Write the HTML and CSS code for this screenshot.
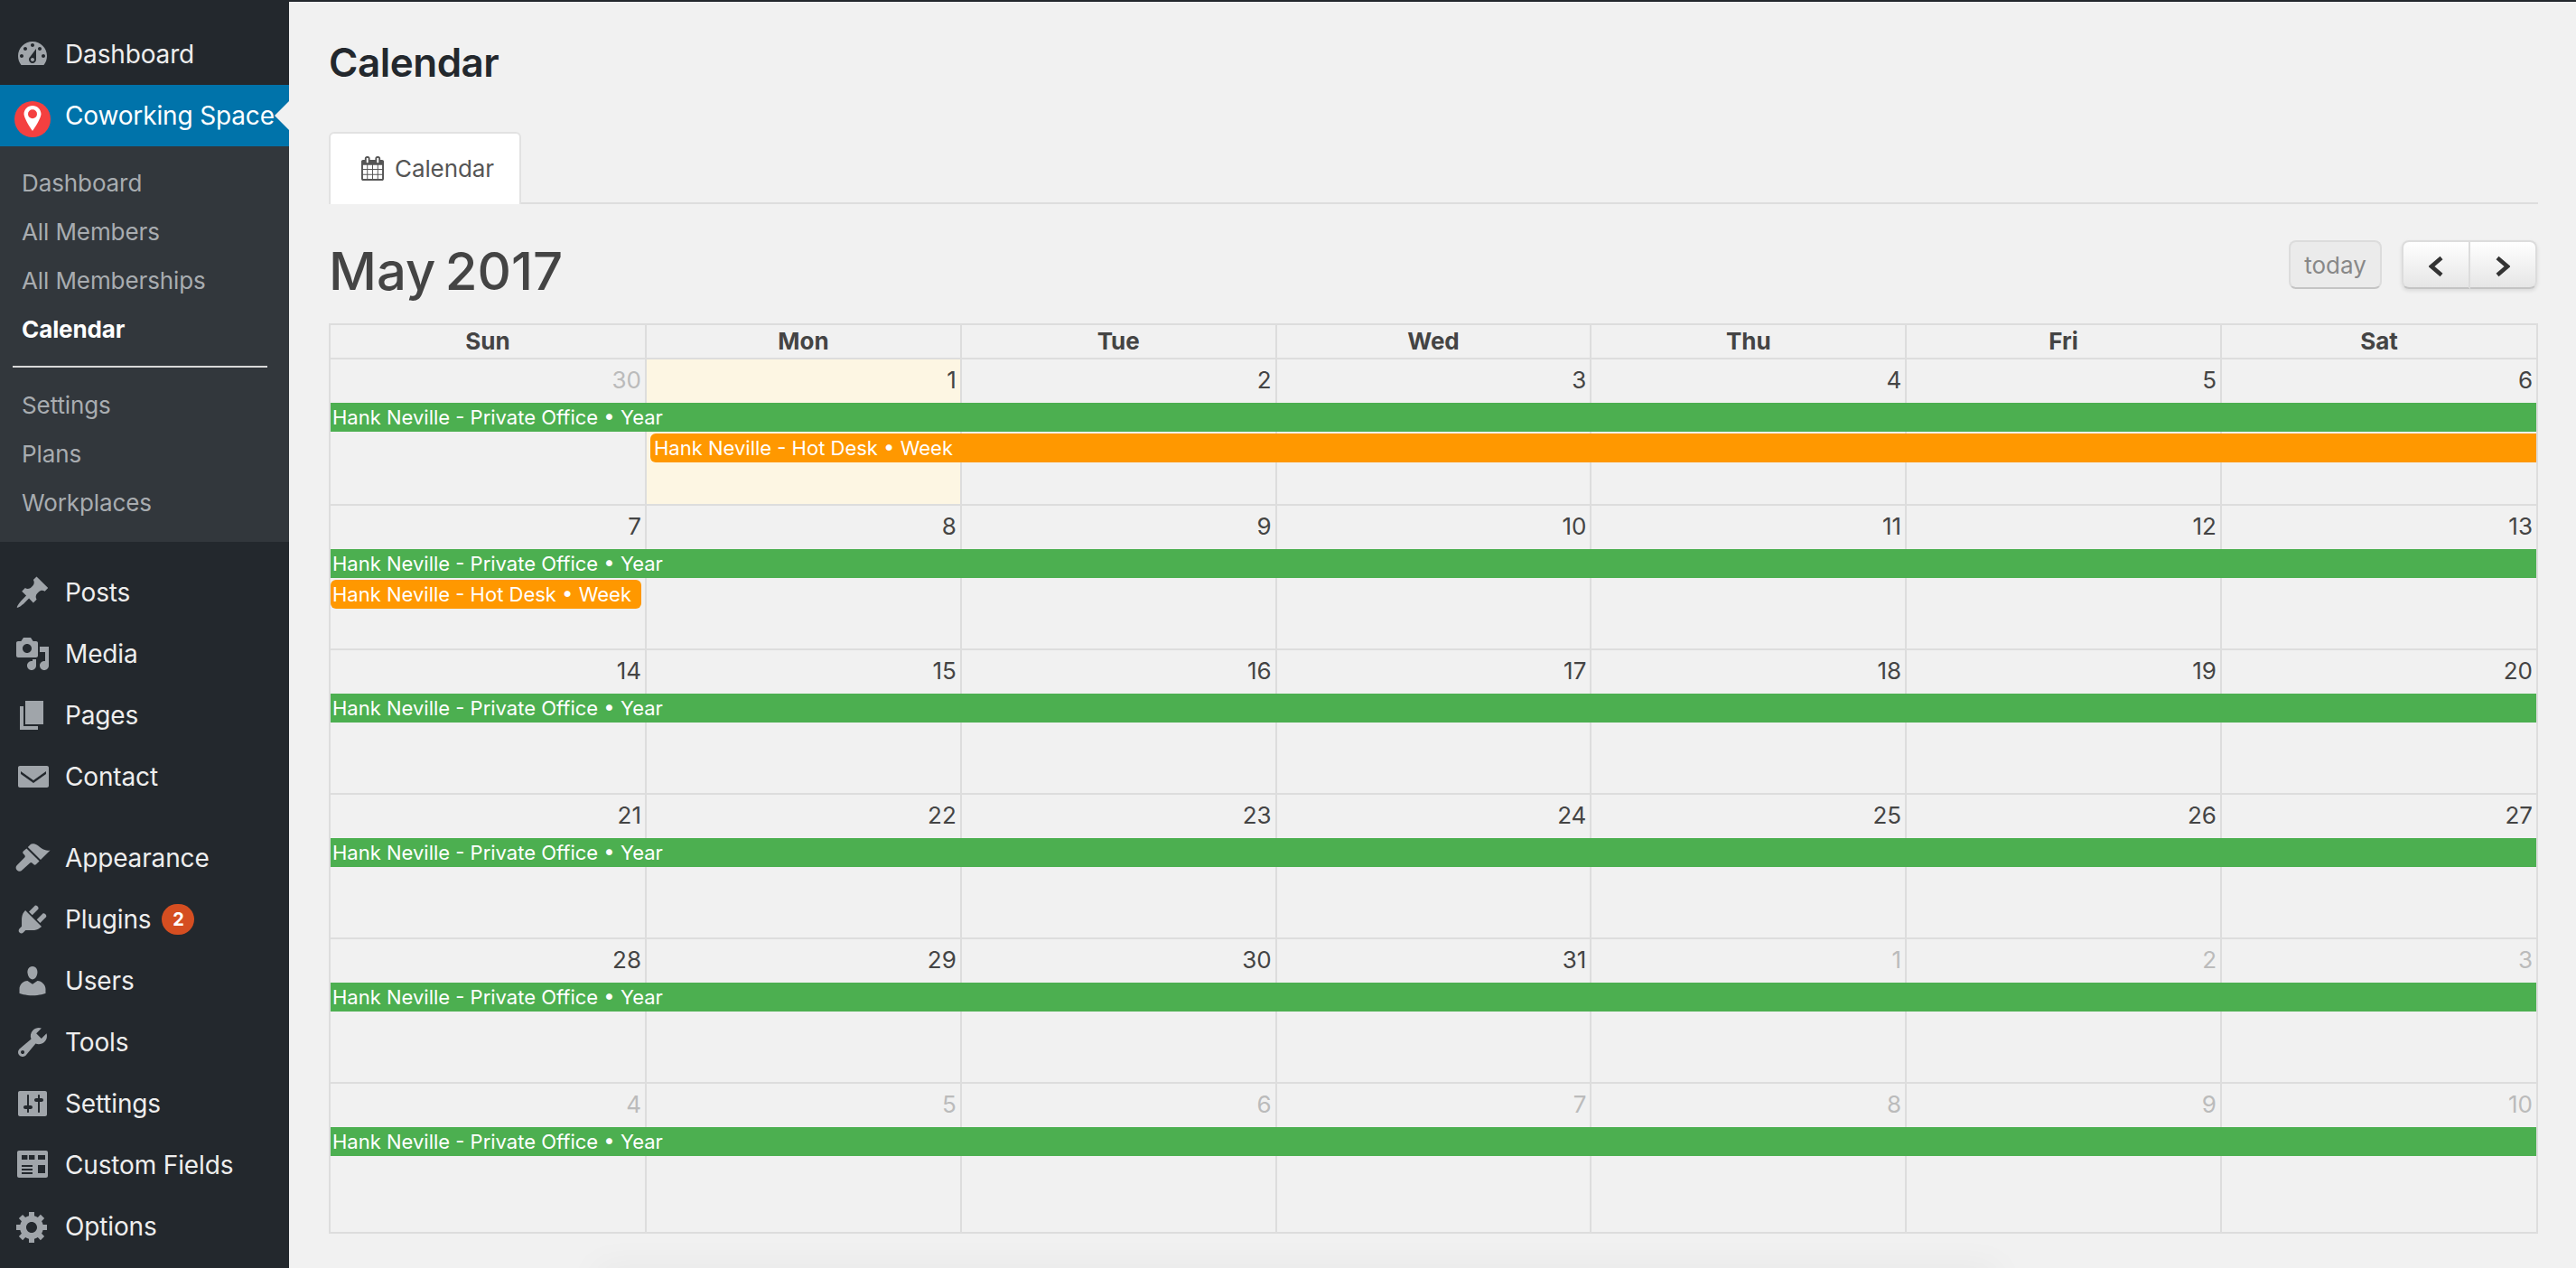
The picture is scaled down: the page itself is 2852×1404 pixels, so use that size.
FILE: index.html
```html
<!DOCTYPE html>
<html>
<head>
    <title>Calendar</title>
    <link rel="stylesheet" href="styles.css">
</head>
<body>
    <nav class="sidebar">
        <a class="menu-item"><svg class="icon" viewBox="0 0 20 20"><path fill-rule="evenodd" d="M3.76 16h12.48c1.1-1.37 1.76-3.11 1.76-5 0-4.42-3.58-8-8-8s-8 3.58-8 8c0 1.89.66 3.63 1.76 5zM10 4c.55 0 1 .45 1 1s-.45 1-1 1-1-.45-1-1 .45-1 1-1zM6 6c.55 0 1 .45 1 1s-.45 1-1 1-1-.45-1-1 .45-1 1-1zm8 0c.55 0 1 .45 1 1s-.45 1-1 1-1-.45-1-1 .45-1 1-1zm-5.37 5.55L12 7v6c0 1.1-.9 2-2 2s-2-.9-2-2c0-.57.24-1.08.63-1.45zM4 10c.55 0 1 .45 1 1s-.45 1-1 1-1-.45-1-1 .45-1 1-1zm12 0c.55 0 1 .45 1 1s-.45 1-1 1-1-.45-1-1 .45-1 1-1zm-5 3c0-.55-.45-1-1-1s-1 .45-1 1 .45 1 1 1 1-.45 1-1z"/></svg>Dashboard</a>
        <a class="menu-item active"><svg class="icon" viewBox="0 0 40 40"><circle cx="20" cy="24" r="20" fill="#f44040"/><path fill="#fff" fill-rule="evenodd" d="M20 9c-5.300 0-9.500 4.200-9.500 9.300 0 3.400 5.500 13.500 9.500 18.700 4-5.200 9.500-15.300 9.500-18.700C29.500 13.200 25.300 9 20 9zm0 4.300a5 5 0 1 1 0 10 5 5 0 0 1 0-10z"/></svg>Coworking Space</a>
        <div class="submenu">
            <a class="sub-item">Dashboard</a>
            <a class="sub-item">All Members</a>
            <a class="sub-item">All Memberships</a>
            <a class="sub-item current">Calendar</a>
            <hr class="sub-divider">
            <a class="sub-item">Settings</a>
            <a class="sub-item">Plans</a>
            <a class="sub-item">Workplaces</a>
        </div>
        <div class="menu-group">
            <a class="menu-item"><svg class="icon" viewBox="0 0 20 20"><path d="M10.440 3.020l1.820-1.820 6.360 6.350-1.830 1.820c-1.050-.68-2.480-.57-3.410.36l-.75.75c-.92.93-1.040 2.350-.35 3.410l-1.830 1.820-2.410-2.410-2.800 2.790c-.42.42-3.380 2.710-3.800 2.290s1.860-3.390 2.280-3.810l2.790-2.790L4.100 9.360l1.830-1.820c1.050.69 2.480.57 3.400-.36l.75-.75c.93-.92 1.050-2.350.36-3.410z"/></svg>Posts</a>
            <a class="menu-item"><svg class="icon" viewBox="0 0 20 20"><path fill-rule="evenodd" d="M13 11V4c0-.55-.45-1-1-1h-1.670L9 1H5L3.670 3H2c-.55 0-1 .45-1 1v7c0 .55.45 1 1 1h10c.55 0 1-.45 1-1zM7 4.500c1.380 0 2.500 1.120 2.500 2.500S8.380 9.500 7 9.500 4.500 8.380 4.500 7 5.620 4.500 7 4.500zM14 6h5v10.500c0 1.380-1.120 2.500-2.500 2.500S14 17.880 14 16.500s1.120-2.500 2.500-2.500c.17 0 .34.020.5.050V9h-3V6zm-4 8.050V13h2v3.500c0 1.380-1.120 2.500-2.500 2.500S7 17.880 7 16.500 8.120 14 9.500 14c.17 0 .34.020.5.050z"/></svg>Media</a>
            <a class="menu-item"><svg class="icon" viewBox="0 0 20 20"><path d="M6 15V2h10v13H6zm-1 1h8v2H3V5h2v11z"/></svg>Pages</a>
            <a class="menu-item"><svg class="icon" viewBox="0 0 20 20"><path fill-rule="evenodd" d="M3 4h15c.55 0 1 .45 1 1v10c0 .55-.45 1-1 1H3c-.55 0-1-.45-1-1V5c0-.55.45-1 1-1zm.500 3l7 5 7-5v1.500l-7 5-7-5z"/></svg>Contact</a>
        </div>
        <div class="menu-group">
            <a class="menu-item"><svg class="icon" viewBox="0 0 20 20"><path d="M14.480 11.060L7.410 3.990l1.500-1.500c.5-.56 2.300-.47 3.510.32 1.210.8 1.430 1.280 2.910 2.100 1.180.64 2.450 1.260 4.450.85zM6.700 4.700l7.070 7.070-1.770 1.770c-.39.39-1.020.39-1.410 0l-.7-.7c-.39-.39-1.030-.39-1.420 0L4.200 16.800c-.8.8-2 .8-2.800 0s-.8-2 0-2.800l4.200-4.200c.39-.39.39-1.030 0-1.420l-.7-.7c-.39-.39-.39-1.020 0-1.410z"/></svg>Appearance</a>
            <a class="menu-item"><svg class="icon" viewBox="0 0 20 20"><path d="M13.110 4.360L9.870 7.600 8 5.730l3.240-3.240c.35-.34 1.050-.2 1.560.32.52.51.66 1.210.31 1.550zm-8 1.770l.91-1.120 9.010 9.010-1.190.84c-.71.71-2.630 1.160-3.820 1.160H6.140L4.900 17.260c-.59.59-1.540.59-2.120 0-.59-.58-.59-1.530 0-2.120l1.240-1.240v-3.880c0-1.130.4-3.190 1.090-3.890zm7.260 3.970l3.240-3.240c.34-.35 1.040-.21 1.550.31.52.51.66 1.210.31 1.550l-3.240 3.250z"/></svg>Plugins<span class="badge">2</span></a>
            <a class="menu-item"><svg class="icon" viewBox="0 0 20 20"><path d="M10 9.250c-2.270 0-2.730-3.440-2.730-3.440C7 4.020 7.820 2 9.970 2c2.160 0 2.980 2.020 2.710 3.810 0 0-.41 3.440-2.680 3.440zm0 2.570L12.720 10c2.390 0 4.520 2.330 4.520 4.530v2.490s-3.650 1.130-7.240 1.130c-3.650 0-7.240-1.130-7.240-1.130v-2.490c0-2.250 1.940-4.480 4.470-4.480z"/></svg>Users</a>
            <a class="menu-item"><svg class="icon" viewBox="0 0 20 20"><path fill-rule="evenodd" d="M16.680 9.770c-1.340 1.340-3.300 1.670-4.950.99l-5.410 6.520c-.99.99-2.590.99-3.580 0s-.99-2.590 0-3.570l6.520-5.420c-.68-1.650-.35-3.610.99-4.950 1.280-1.280 3.120-1.620 4.720-1.060l-2.890 2.890 2.820 2.820 2.860-2.870c.53 1.580.18 3.390-1.080 4.650zM3.810 16.210c.4.39 1.040.39 1.430 0 .4-.4.4-1.040 0-1.430-.39-.4-1.030-.4-1.430 0-.39.39-.39 1.030 0 1.430z"/></svg>Tools</a>
            <a class="menu-item"><svg class="icon" viewBox="0 0 20 20"><path fill-rule="evenodd" d="M18 16V4c0-.55-.45-1-1-1H3c-.55 0-1 .45-1 1v12c0 .55.45 1 1 1h14c.55 0 1-.45 1-1zM8 11h1c.55 0 1 .45 1 1s-.45 1-1 1H8v1.500c0 .28-.22.5-.5.5s-.5-.22-.5-.5V13H6c-.55 0-1-.45-1-1s.45-1 1-1h1V5.500c0-.28.22-.5.5-.5s.5.22.5.5V11zm5-2h-1c-.55 0-1-.45-1-1s.45-1 1-1h1V5.500c0-.28.22-.5.5-.5s.5.22.5.5V7h1c.55 0 1 .45 1 1s-.45 1-1 1h-1v5.500c0 .28-.22.5-.5.5s-.5-.22-.5-.5V9z"/></svg>Settings</a>
            <a class="menu-item"><svg class="icon" viewBox="0 0 20 20"><path fill-rule="evenodd" d="M2.500 2h15c.55 0 1 .45 1 1v13c0 .55-.45 1-1 1h-15c-.55 0-1-.45-1-1V3c0-.55.45-1 1-1zM4 4.500V7h3.200V4.500H4zm4 0V7h3.200V4.500H8zm5 0V7h4V4.500h-4zM4 10v1h6v-1H4zm0 2v1h6v-1H4zm0 2v1h6v-1H4zm9-4v4.500h4V10h-4z"/></svg>Custom Fields</a>
            <a class="menu-item"><svg class="icon" viewBox="0 0 20 20"><path fill-rule="evenodd" d="M18 12h-2.180c-.17.7-.44 1.350-.81 1.930l1.540 1.540-2.100 2.100-1.540-1.540c-.58.36-1.230.63-1.910.79V19H8v-2.180c-.68-.16-1.330-.43-1.910-.79l-1.540 1.540-2.120-2.120 1.540-1.540c-.36-.58-.63-1.230-.79-1.910H1V9.030h2.170c.16-.7.44-1.350.8-1.940L2.430 5.550l2.100-2.100 1.540 1.540c.58-.37 1.240-.64 1.930-.81V2h3v2.180c.68.16 1.330.43 1.910.79l1.540-1.540 2.120 2.120-1.540 1.540c.36.59.64 1.240.8 1.940H18V12zm-8.500 1.500c1.660 0 3-1.340 3-3s-1.340-3-3-3-3 1.340-3 3 1.340 3 3 3z"/></svg>Options</a>
        </div>
    </nav>

    <main class="content">
        <h1 class="page-title">Calendar</h1>
        <div class="tabs">
            <a class="tab"><svg class="tab-icon" viewBox="0 0 1664 1792"><path d="M128 1664h288v-288h-288v288zm352 0h320v-288h-320v288zm-352-352h288v-320h-288v320zm352 0h320v-320h-320v320zm-352-384h288v-288h-288v288zm736 736h320v-288h-320v288zm-384-736h320v-288h-320v288zm768 736h288v-288h-288v288zm-384-352h320v-320h-320v320zm-352-864v-288q0-13-9.500-22.500t-22.500-9.500h-64q-13 0-22.500 9.500t-9.500 22.500v288q0 13 9.500 22.500t22.500 9.500h64q13 0 22.500-9.500t9.500-22.500zm736 864h288v-320h-288v320zm-384-384h320v-288h-320v288zm384 0h288v-288h-288v288zm32-480v-288q0-13-9.500-22.500t-22.500-9.500h-64q-13 0-22.500 9.500t-9.500 22.500v288q0 13 9.500 22.500t22.500 9.500h64q13 0 22.500-9.500t9.500-22.500zm384-64v1280q0 52-38 90t-90 38h-1408q-52 0-90-38t-38-90v-1280q0-52 38-90t90-38h128v-96q0-66 47-113t113-47h64q66 0 113 47t47 113v96h384v-96q0-66 47-113t113-47h64q66 0 113 47t47 113v96h128q52 0 90 38t38 90z"/></svg>Calendar</a>
        </div>

        <div class="toolbar">
            <h2 class="month">May 2017</h2>
            <div class="toolbar-buttons">
                <button class="btn btn-today">today</button>
                <div class="btn-group">
                    <button class="btn btn-nav"><svg class="chevron" viewBox="0 0 16 24"><path d="M14 2.500L3 12l11 9.500"/></svg></button>
                    <button class="btn btn-nav"><svg class="chevron" viewBox="0 0 16 24"><path d="M2 2.500L13 12 2 21.500"/></svg></button>
                </div>
            </div>
        </div>

        <div class="calendar">
            <div class="day-names">
                <div>Sun</div><div>Mon</div><div>Tue</div><div>Wed</div><div>Thu</div><div>Fri</div><div>Sat</div>
            </div>

            <div class="week first">
                <div class="day other">30</div><div class="day today">1</div><div class="day">2</div><div class="day">3</div><div class="day">4</div><div class="day">5</div><div class="day">6</div>
                <div class="event green row-a full">Hank Neville - Private Office • Year</div>
                <div class="event orange row-b from-mon">Hank Neville - Hot Desk • Week</div>
            </div>
            <div class="week">
                <div class="day">7</div><div class="day">8</div><div class="day">9</div><div class="day">10</div><div class="day">11</div><div class="day">12</div><div class="day">13</div>
                <div class="event green row-a full">Hank Neville - Private Office • Year</div>
                <div class="event orange row-b sun-only">Hank Neville - Hot Desk • Week</div>
            </div>
            <div class="week">
                <div class="day">14</div><div class="day">15</div><div class="day">16</div><div class="day">17</div><div class="day">18</div><div class="day">19</div><div class="day">20</div>
                <div class="event green row-a full">Hank Neville - Private Office • Year</div>
            </div>
            <div class="week">
                <div class="day">21</div><div class="day">22</div><div class="day">23</div><div class="day">24</div><div class="day">25</div><div class="day">26</div><div class="day">27</div>
                <div class="event green row-a full">Hank Neville - Private Office • Year</div>
            </div>
            <div class="week">
                <div class="day">28</div><div class="day">29</div><div class="day">30</div><div class="day">31</div><div class="day other">1</div><div class="day other">2</div><div class="day other">3</div>
                <div class="event green row-a full">Hank Neville - Private Office • Year</div>
            </div>
            <div class="week last">
                <div class="day other">4</div><div class="day other">5</div><div class="day other">6</div><div class="day other">7</div><div class="day other">8</div><div class="day other">9</div><div class="day other">10</div>
                <div class="event green row-a full">Hank Neville - Private Office • Year</div>
            </div>
        </div>
    </main>
</body>
</html>
```

FILE: styles.css
```css
html, body {
    height: 100%;
}
body {
    margin: 0;
    display: flex;
    height: 1404px;
    overflow: hidden;
    font-family: Inter, "Liberation Sans", Arial, sans-serif;
    background-color: #f1f1f1;
    color: #444444;
}

/* sidebar */
.sidebar {
    flex: 0 0 320px;
    padding-top: 26px;
    background-color: #23282d;
}
.menu-item {
    display: flex;
    align-items: center;
    position: relative;
    height: 68px;
    font-size: 28px;
    letter-spacing: -0.15px;
    color: #eeeeee;
}
.icon {
    flex: 0 0 40px;
    width: 40px;
    height: 40px;
    margin: 0 16px;
    overflow: visible;
    fill: #a0a5aa;
}
.menu-item.active {
    background-color: #0073aa;
    color: #ffffff;
}
.menu-item.active::after {
    content: "";
    position: absolute;
    right: 0;
    top: 18px;
    border: 16px solid transparent;
    border-left: 0;
    border-right-color: #f1f1f1;
}
.submenu {
    padding: 13px 0 17px;
    background-color: #32373c;
}
.sub-item {
    display: block;
    height: 54px;
    padding-left: 24px;
    font-size: 26px;
    line-height: 56px;
    letter-spacing: -0.1px;
    color: #a8acb0;
}
.sub-item.current {
    font-weight: bold;
    color: #ffffff;
}
.sub-divider {
    height: 2px;
    margin: 14px 24px 14px 14px;
    border: 0;
    background-color: #d8d8d8;
}
.menu-group {
    margin-bottom: 22px;
    padding-top: 22px;
}
.menu-group + .menu-group {
    padding-top: 0;
}
.badge {
    width: 36px;
    height: 34px;
    margin-left: 12px;
    border-radius: 17px;
    background-color: #d54e21;
    color: #ffffff;
    font-size: 20px;
    font-weight: bold;
    line-height: 34px;
    text-align: center;
}

/* main area */
.content {
    flex: 1;
    position: relative;
    padding: 0 42px 0 44px;
    border-top: 2px solid #23282d;
}
.content::after {
    content: "";
    position: absolute;
    left: 340px;
    right: 640px;
    bottom: -30px;
    height: 30px;
    box-shadow: 0 0 40px rgba(0, 0, 0, 0.05);
}
.page-title {
    margin: 0;
    padding-top: 42px;
    height: 102px;
    box-sizing: border-box;
    font-size: 44px;
    line-height: 50px;
    font-weight: 600;
    letter-spacing: -0.5px;
    color: #23282d;
}
.tabs {
    display: flex;
    height: 80px;
    margin-top: 42px;
    box-sizing: border-box;
    border-bottom: 2px solid #dddddd;
}
.tab {
    display: flex;
    align-items: center;
    width: 213px;
    height: 80px;
    box-sizing: border-box;
    padding: 0 0 2px 34px;
    border: 2px solid #e2e2e2;
    border-bottom: 0;
    border-radius: 6px 6px 0 0;
    background-color: #ffffff;
    font-size: 26px;
    letter-spacing: -0.1px;
    color: #555555;
}
.tab-icon {
    width: 25px;
    height: 27px;
    margin-right: 12px;
    fill: #555555;
}
.toolbar {
    display: flex;
    justify-content: space-between;
    align-items: flex-start;
    height: 132px;
    padding-top: 40px;
    box-sizing: border-box;
}
.month {
    margin: 0;
    font-size: 58px;
    line-height: 68px;
    font-weight: 500;
    word-spacing: -5px;
}
.toolbar-buttons {
    display: flex;
    gap: 22px;
    margin-right: 1px;
}
.btn {
    height: 54px;
    padding: 0;
    border: 2px solid #dcdcdc;
    border-bottom-color: #c4c4c4;
    border-radius: 8px;
    font-family: inherit;
    font-size: 26px;
}
.btn-today {
    width: 103px;
    background-color: #ebebeb;
    color: #888888;
}
.btn-group {
    display: flex;
    border-radius: 8px;
    box-shadow: 0 2px 4px rgba(0, 0, 0, 0.1);
}
.btn-nav {
    width: 76px;
    background: linear-gradient(#ffffff, #e6e6e6);
}
.btn-nav:first-child {
    border-radius: 8px 0 0 8px;
}
.btn-nav:last-child {
    width: 74px;
    border-left: 0;
    border-radius: 0 8px 8px 0;
}
.chevron {
    width: 16px;
    height: 24px;
    vertical-align: middle;
    fill: none;
    stroke: #333333;
    stroke-width: 4.5;
}

/* calendar grid */
.calendar {
    border: 2px solid #dddddd;
}
.day-names {
    display: grid;
    grid-template-columns: 350px repeat(5, 348.8px) 1fr;
    height: 36px;
    border-bottom: 2px solid #dddddd;
    font-size: 26px;
    font-weight: 700;
    line-height: 36px;
    text-align: center;
}
.day-names div {
    border-right: 2px solid #dddddd;
}
.day-names div:last-child {
    border-right: 0;
}
.week {
    display: grid;
    grid-template-columns: 350px repeat(5, 348.8px) 1fr;
    grid-template-rows: 48px 32px 2px 32px 1fr;
    height: 158px;
    border-bottom: 2px solid #dddddd;
}
.week.first {
    height: 160px;
}
.week.last {
    height: 164px;
    border-bottom: 0;
}
.day {
    grid-row: 1 / -1;
    padding: 6px 4px 0 0;
    border-right: 2px solid #dddddd;
    font-size: 26px;
    line-height: 34px;
    text-align: right;
}
.day:nth-child(7) {
    border-right: 0;
}
.day:nth-child(1) { grid-column: 1; }
.day:nth-child(2) { grid-column: 2; }
.day:nth-child(3) { grid-column: 3; }
.day:nth-child(4) { grid-column: 4; }
.day:nth-child(5) { grid-column: 5; }
.day:nth-child(6) { grid-column: 6; }
.day:nth-child(7) { grid-column: 7; }
.day.other {
    color: #bbbbbb;
}
.day.today {
    background-color: #fdf6e3;
}
.event {
    padding-left: 2px;
    color: #ffffff;
    font-size: 22px;
    line-height: 32px;
    white-space: nowrap;
}
.green {
    background-color: #4caf50;
}
.orange {
    background-color: #ff9800;
}
.row-a {
    grid-row: 2;
}
.row-b {
    grid-row: 4;
}
.full {
    grid-column: 1 / -1;
}
.from-mon {
    grid-column: 2 / -1;
    margin-left: 4px;
    padding-left: 4px;
    border-radius: 6px 0 0 6px;
}
.sun-only {
    grid-column: 1;
    margin-right: 6px;
    border-radius: 6px;
}
```
